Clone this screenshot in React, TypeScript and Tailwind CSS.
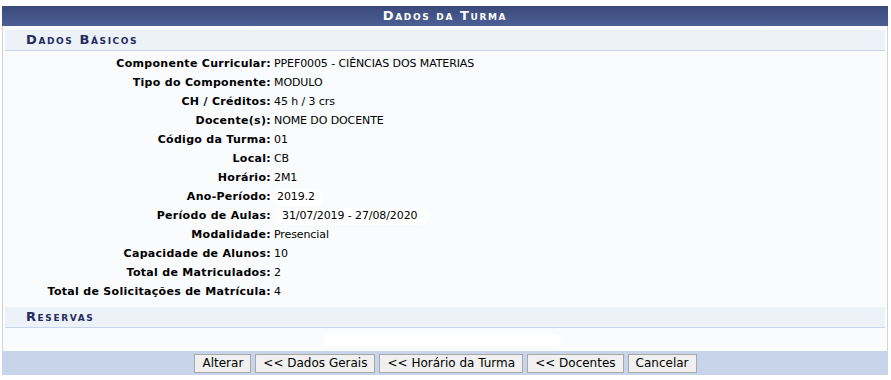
import React from "react";

const rows: [string, React.ReactNode][] = [
  ["Componente Curricular:", "PPEF0005 - CIÊNCIAS DOS MATERIAS"],
  ["Tipo do Componente:", "MODULO"],
  ["CH / Créditos:", "45 h / 3 crs"],
  ["Docente(s):", "NOME DO DOCENTE"],
  ["Código da Turma:", "01"],
  ["Local:", "CB"],
  ["Horário:", "2M1"],
  [
    "Ano-Período:",
    <span className="inline-block bg-white rounded-full pl-[3px] pr-[8px]">2019.2</span>,
  ],
  [
    "Período de Aulas:",
    <span className="inline-block bg-white rounded-full pl-[8px] pr-[12px]">31/07/2019 - 27/08/2020</span>,
  ],
  ["Modalidade:", "Presencial"],
  ["Capacidade de Alunos:", "10"],
  ["Total de Matriculados:", "2"],
  ["Total de Solicitações de Matrícula:", "4"],
];

const buttons = ["Alterar", "<< Dados Gerais", "<< Horário da Turma", "<< Docentes", "Cancelar"];

export default function App() {
  return (
    <div
      className="w-[891px] h-[380px] bg-white pt-[6px] pl-[2px] text-[11px] text-black"
      style={{ fontFamily: "Verdana, 'DejaVu Sans', sans-serif" }}
    >
      <div className="w-[886px] border border-[#d4d4d4] bg-[#f9fbfd]">
        <div className="h-[20px] bg-gradient-to-b from-[#3a4a7a] to-[#4c5f95] flex items-center justify-center text-white font-bold tracking-[1.6px] [font-variant:small-caps] text-[13px] -mt-px -mx-px">
          Dados da Turma
        </div>
        <div className="px-[2px] pt-[4px]">
          <div className="h-[21px] bg-[#edf1f8] border-b border-[#c8d5ec] flex items-center pl-[21px] font-bold text-[#222c5e] tracking-[1.6px] [font-variant:small-caps] text-[13px]">
            Dados Básicos
          </div>
          <div className="pt-[4px] pb-[5px]">
            {rows.map(([l, v], i) => (
              <div key={i} className="flex h-[19px] items-center">
                <div className="w-[268px] text-right font-bold pr-[2px] whitespace-nowrap tracking-[0.3px]">{l}</div>
                <div className="pl-[1px] whitespace-nowrap tracking-[-0.1px]">{v}</div>
              </div>
            ))}
          </div>
          <div className="h-[21px] bg-[#edf1f8] border-b border-[#c8d5ec] flex items-center pl-[21px] font-bold text-[#222c5e] tracking-[1.6px] [font-variant:small-caps] text-[13px]">
            Reservas
          </div>
          <div className="h-[23px] flex items-center">
            <div className="ml-[318px] w-[238px] h-[12px] bg-white rounded-full" />
          </div>
        </div>
        <div className="h-[24px] bg-[#c8d4ea] flex items-center justify-center gap-[4px] -mx-px -mb-px pl-[1px]">
          {buttons.map((b) => (
            <button
              key={b}
              className="h-[19px] px-[7px] bg-[#f0f0f0] border border-[#a8a8a8] text-[12px] leading-none"
              style={{ fontFamily: "Verdana, 'DejaVu Sans', sans-serif" }}
            >
              {b}
            </button>
          ))}
        </div>
      </div>
    </div>
  );
}
